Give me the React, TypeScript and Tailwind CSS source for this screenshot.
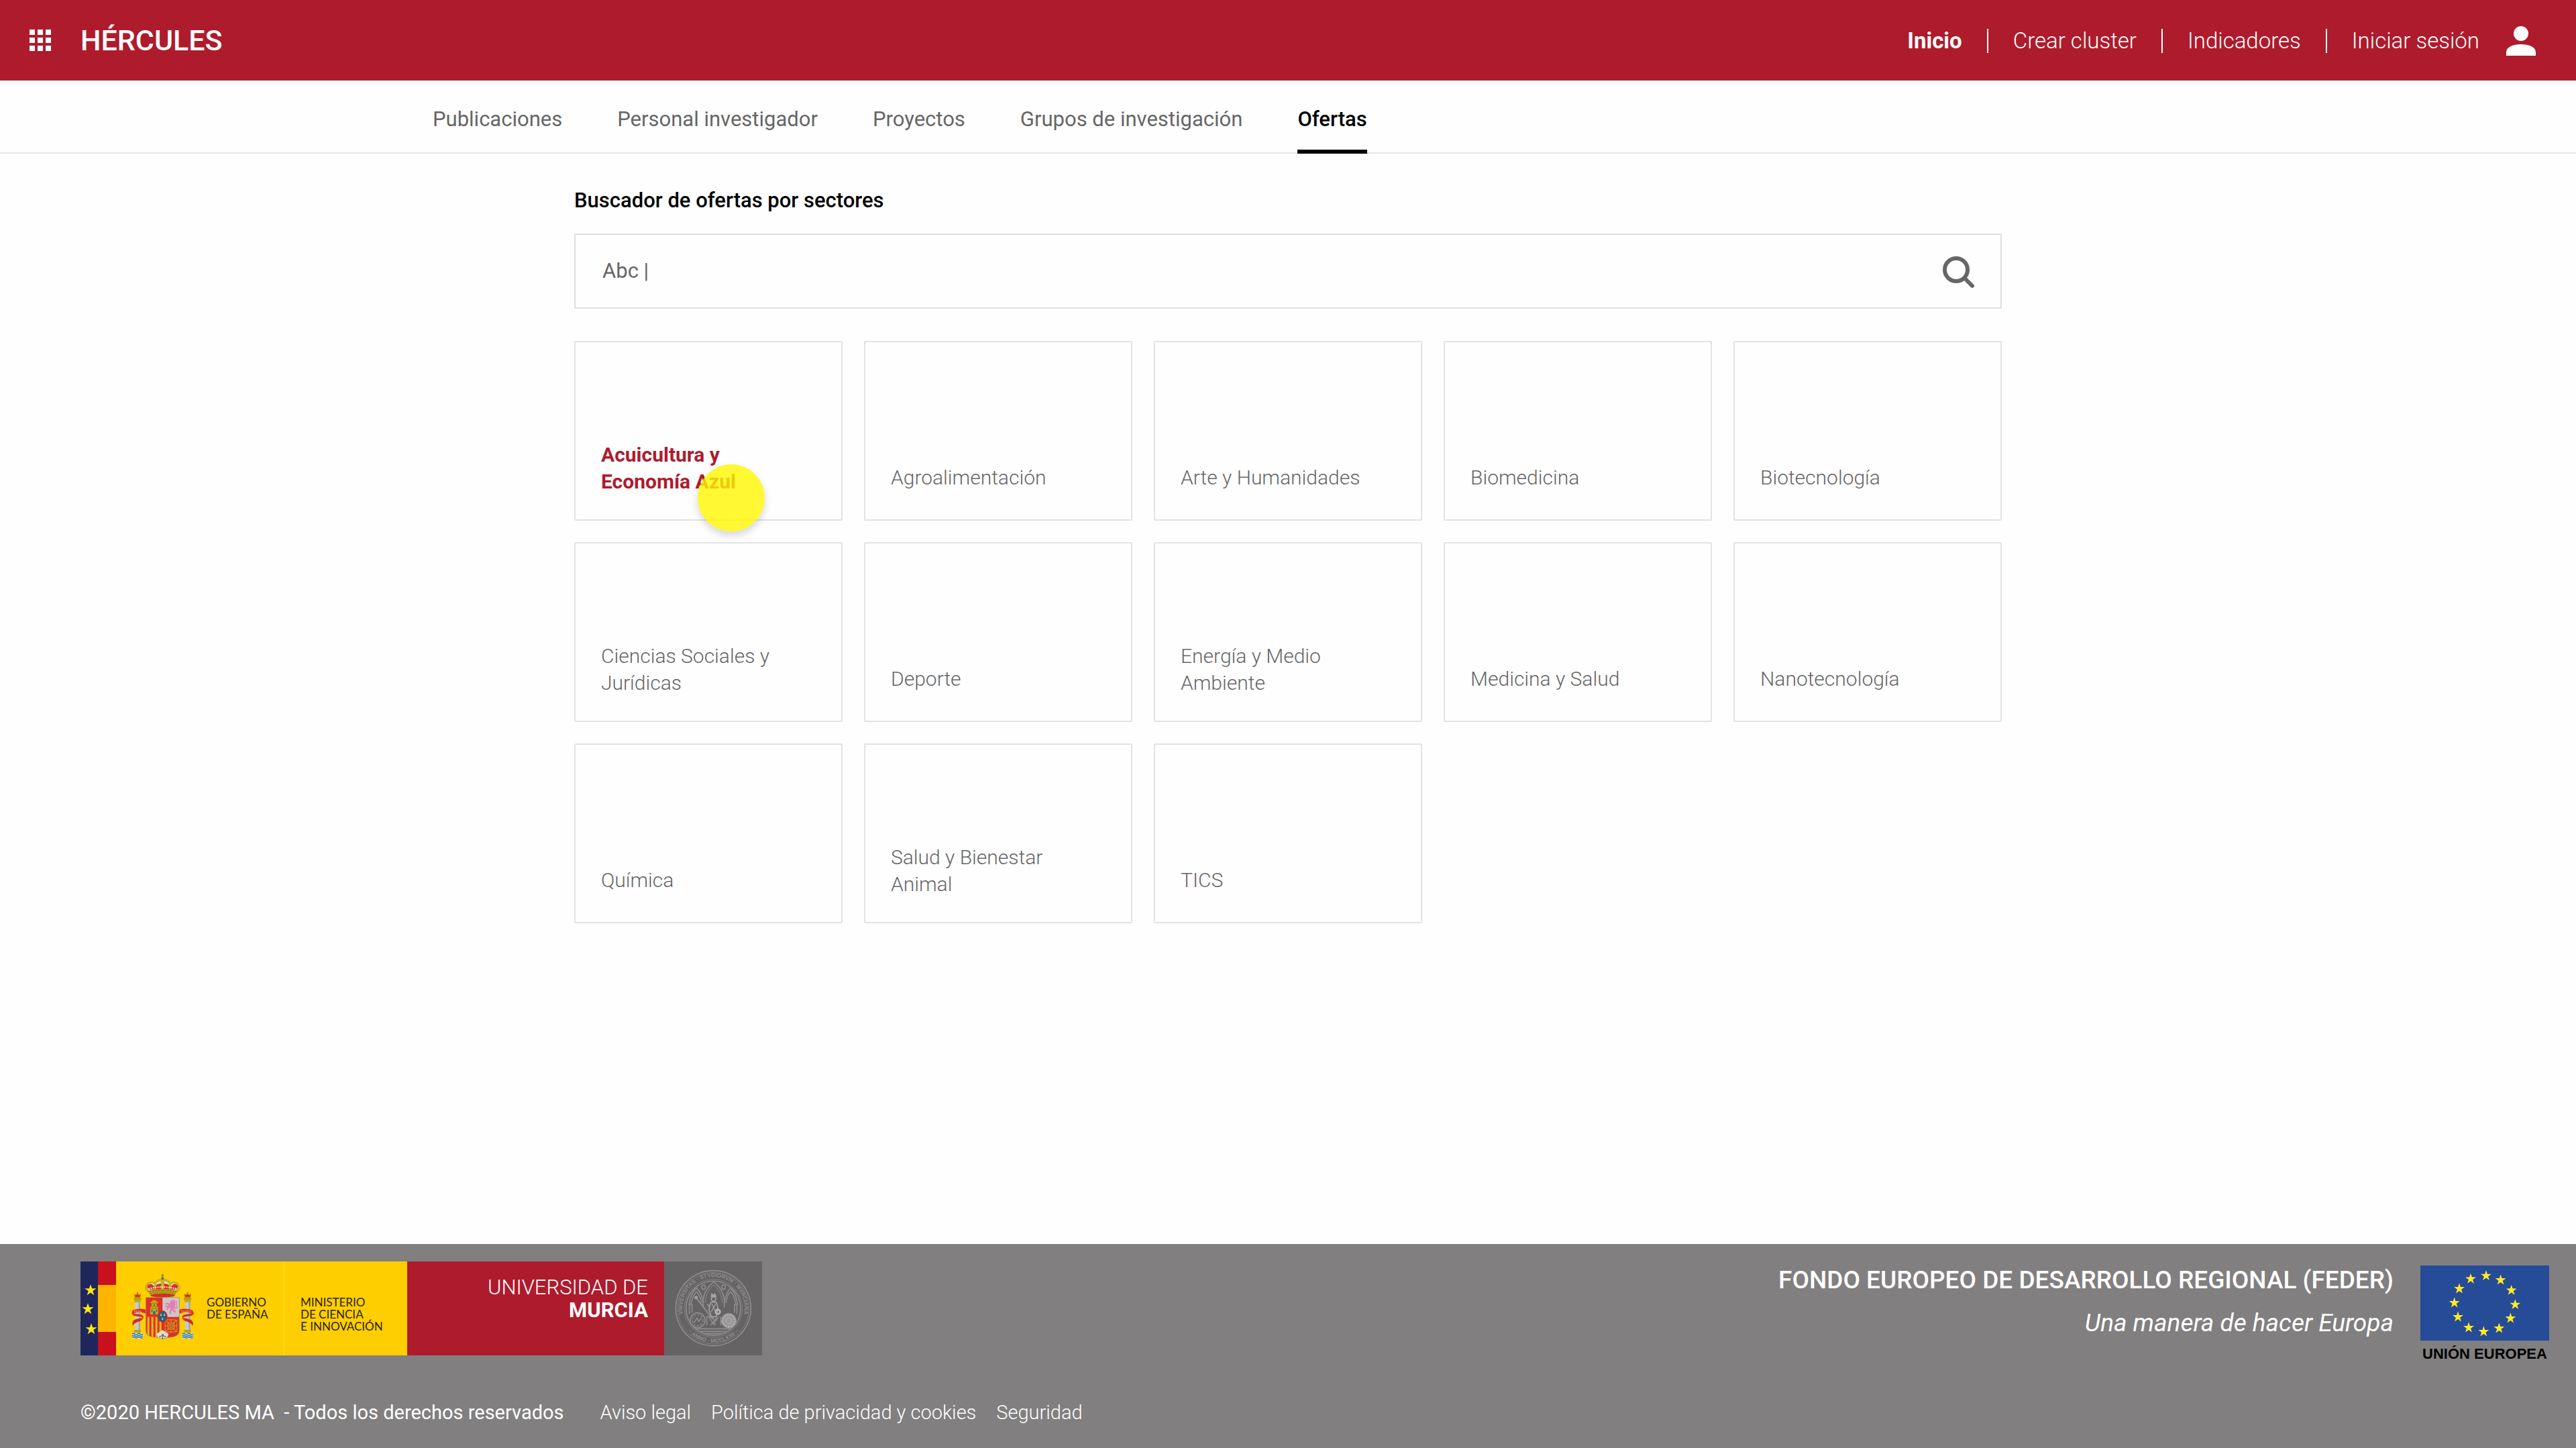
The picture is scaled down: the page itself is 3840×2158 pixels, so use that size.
import { MdApps } from "react-icons/md";

const topLinks = ["Inicio", "Crear cluster", "Indicadores", "Iniciar sesión"];
const sections = ["Publicaciones", "Personal investigador", "Proyectos", "Grupos de investigación", "Ofertas"];
const sectors = [
  "Acuicultura y Economía Azul",
  "Agroalimentación",
  "Arte y Humanidades",
  "Biomedicina",
  "Biotecnología",
  "Ciencias Sociales y Jurídicas",
  "Deporte",
  "Energía y Medio Ambiente",
  "Medicina y Salud",
  "Nanotecnología",
  "Química",
  "Salud y Bienestar Animal",
  "TICS",
];

function starPoints(cx: number, cy: number, r: number) {
  return Array.from({ length: 10 }, (_, i) => {
    const a = (Math.PI / 5) * i - Math.PI / 2;
    const d = i % 2 ? r * 0.39 : r;
    return `${(cx + d * Math.cos(a)).toFixed(1)},${(cy + d * Math.sin(a)).toFixed(1)}`;
  }).join(" ");
}

function UserIcon() {
  return (
    <svg viewBox="0 0 44 44" className="size-11" fill="currentColor" aria-hidden="true">
      <circle cx="22" cy="11" r="11" />
      <path d="M0 44V39C0 31 10 27 22 27S44 31 44 39V44z" />
    </svg>
  );
}

function SearchIcon() {
  return (
    <svg viewBox="0 -4 48 52" className="h-[52px] w-12 text-[#666]" fill="none" stroke="currentColor" strokeWidth="6" strokeLinecap="round" aria-hidden="true">
      <circle cx="20" cy="20" r="17" />
      <path d="M33 33L44 44" />
    </svg>
  );
}

function FlagStrip() {
  return (
    <svg viewBox="0 0 53 140" className="h-[140px] w-[53px] shrink-0" aria-hidden="true">
      <rect width="27" height="140" fill="#1f265c" />
      <rect x="26" width="27" height="140" fill="#c9101c" />
      <rect x="26" y="35" width="27" height="70" fill="#ffb400" />
      {[[15, 43], [11, 71], [16, 101]].map(([x, y]) => (
        <polygon key={y} points={starPoints(x, y, 9)} fill="#ffe813" />
      ))}
    </svg>
  );
}

function Pillar({ x }: { x: number }) {
  return (
    <g>
      <path d={`M${x - 13} 113q-5 12 3 18h20q8-6 3-18l-6 5-7-9-7 9z`} fill="#c96a14" />
      <path d={`M${x - 9} 119h18v7h-18z`} fill="#d3241f" />
      <circle cx={x} cy="109" r="3" fill="#a8780c" />
      <rect x={x - 17} y="132" width="34" height="9" rx="2" fill="#a9a013" />
      <rect x={x - 14} y="141" width="28" height="11" fill="#c0a90d" />
      <rect x={x - 12} y="151" width="24" height="126" fill="#c9c9c7" />
      <rect x={x + 5} y="151" width="7" height="126" fill="#a5a5a3" />
      <rect x={x - 15} y="275" width="30" height="12" fill="#b9a512" />
      <rect x={x - 25} y="289" width="50" height="25" fill="#dfe7e6" />
      {[293, 301, 309].map((y) => (
        <path key={y} d={`M${x - 24} ${y}q6-5 12 0t12 0t12 0t12 0`} fill="none" stroke="#15689b" strokeWidth="4" />
      ))}
    </g>
  );
}

function SpainArms() {
  return (
    <svg viewBox="48 20 282 300" className="h-[100px] w-[94px] shrink-0" role="img" aria-label="Escudo de España">
      {/* crown */}
      <path d="M126 110Q100 96 112 72Q126 52 152 62Q166 44 187 46Q208 44 222 62Q248 52 262 72Q274 96 248 110z" fill="#c9b21c" />
      <path d="M130 98Q110 86 122 74Q136 60 150 72Q146 84 154 94z" fill="#f0e9d8" />
      <path d="M244 98Q264 86 252 74Q238 60 224 72Q228 84 220 94z" fill="#f0e9d8" />
      <path d="M128 95Q112 84 122 74Q138 62 148 80L154 94z" fill="#dc2f26" />
      <path d="M246 95Q262 84 252 74Q236 62 226 80L220 94z" fill="#dc2f26" />
      <path d="M158 94Q150 70 180 67V94z" fill="#dc2f26" />
      <path d="M216 94Q224 70 194 67V94z" fill="#dc2f26" />
      <path d="M156 74Q160 60 179 57V68Q162 68 156 74zM218 74Q214 60 195 57V68Q212 68 218 74z" fill="#e6dfc8" />
      <path d="M124 92Q187 74 250 92" fill="none" stroke="#f4ecd2" strokeWidth="6" strokeDasharray="6 4" />
      <path d="M122 100Q187 86 252 100L242 123Q187 134 132 123z" fill="#bd9a16" />
      <path d="M128 104Q187 92 246 104" fill="none" stroke="#7b6a14" strokeWidth="3" strokeDasharray="8 5" />
      <path d="M134 118Q187 106 240 118L238 125Q187 134 136 125z" fill="#cf3122" />
      <path d="M132 113Q187 101 242 113" fill="none" stroke="#3f7a3a" strokeWidth="3" strokeDasharray="5 9" />
      <path d="M187 24v22M181 32h12" stroke="#8a7d1c" strokeWidth="4" />
      <circle cx="187" cy="45" r="6" fill="#3d7d6d" />
      {/* pillars */}
      <Pillar x={75} />
      <Pillar x={299} />
      {/* ribbons */}
      <path d="M112 184Q80 176 52 188L50 204Q58 200 62 200Q82 192 98 198L112 202z" fill="#dc2f26" />
      <path d="M50 200Q52 214 74 214Q96 214 98 222Q84 222 60 230Q48 240 54 256Q60 246 74 240Q102 234 102 216Q98 206 74 204Q60 204 50 196z" fill="#cf3122" />
      <path d="M262 184Q294 176 322 188L326 204Q318 200 312 200Q292 192 276 198L262 202z" fill="#dc2f26" />
      <path d="M326 200Q324 214 302 214Q280 214 278 222Q292 222 314 230Q328 240 322 256Q314 246 302 240Q274 234 274 216Q278 206 302 204Q316 204 326 196z" fill="#cf3122" />
      <text x="60" y="196" fontSize="13" fontWeight="700" fill="#f0b53c" className="font-['Liberation_Serif',serif]">PLVS</text>
      <text x="270" y="196" fontSize="13" fontWeight="700" fill="#f0b53c" className="font-['Liberation_Serif',serif]">VLTRA</text>
      {/* shield */}
      <clipPath id="shield"><path d="M112 130H262V276Q262 306 220 308Q198 310 187 316Q176 310 154 308Q112 306 112 276z" /></clipPath>
      <g clipPath="url(#shield)">
        <rect x="110" y="128" width="78" height="90" fill="#dd3127" />
        <rect x="187" y="128" width="78" height="90" fill="#cbc8cb" />
        <rect x="110" y="217" width="78" height="102" fill="#e8b817" />
        {[110, 128, 146, 164, 182].map((x) => <rect key={x} x={x} y="217" width="9" height="102" fill="#dd3127" />)}
        <rect x="187" y="217" width="78" height="102" fill="#dd3127" />
        <path d="M160 292L187 276L214 292L204 320H170z" fill="#dcdcd4" />
      </g>
      <path d="M112 130H262V276Q262 306 220 308Q198 310 187 316Q176 310 154 308Q112 306 112 276z" fill="none" stroke="#8d8a7a" strokeWidth="2" />
      {/* castle */}
      <path d="M132 206V170H138V156H134V148H141V142H158V148H166V156H161V170H167V206z" fill="#c9a814" />
      <path d="M133 170h34M133 178h34M138 156h23M149 134v9" stroke="#7a6d14" strokeWidth="2" />
      <path d="M145 206V194Q150 186 155 194V206z" fill="#1a6f9e" />
      <path d="M137 184h5v10h-5zM158 184h5v10h-5zM147 160h5v8h-5z" fill="#1a6f9e" />
      {/* lion */}
      <path d="M222 150l4-10 6 4 6-6 4 7 6 4-6 6 4 8-6 8 8 2-2 5-9-1 2 8 8 6-3 8-8-6-8-6-5 8 4 8-8 2-3-8 4-9 2-12-10 4-3 7-6-4 5-9-8-1-1-7 9 2 8-5-9-3-5 3-3-6 9-4 9 4z" fill="#e77fae" />
      <path d="M242 178q12 4 8-12q-4-12 2-20" fill="none" stroke="#e77fae" strokeWidth="4" />
      {/* chains */}
      <g fill="none" stroke="#d5a216" strokeWidth="4" strokeDasharray="5 2">
        <rect x="199" y="230" width="52" height="54" rx="10" />
        <rect x="211" y="243" width="28" height="29" />
        <path d="M199 230L251 284M251 230L199 284M225 228V288M197 257H253" />
      </g>
      <circle cx="225" cy="257" r="4" fill="#3a8a3a" />
      {/* pomegranate */}
      <path d="M172 306q15-9 30 0M187 306v10" fill="none" stroke="#2f7d3b" strokeWidth="4" />
      <circle cx="188" cy="298" r="5" fill="#d9442c" />
      {/* escutcheon */}
      <ellipse cx="187" cy="215" rx="22" ry="27" fill="#b8312c" />
      <ellipse cx="187" cy="215" rx="17" ry="22" fill="#16639c" />
      {[[180, 207], [195, 207], [187, 225]].map(([x, y]) => (
        <path key={`${x}-${y}`} d={`M${x} ${y - 7}l3 5-1 4h3l-3 4h-4l-3-4h3l-1-4z`} fill="#e2c018" />
      ))}
    </svg>
  );
}

function MurciaSeal() {
  const line = "#8f8d8e";
  return (
    <svg viewBox="15 15 438 420" className="h-[140px] w-[146px] shrink-0 bg-[#656364]" role="img" aria-label="Sello de la Universidad de Murcia">
      <defs>
        <path id="ring-top" d="M99 252A139 139 0 1 1 371 252" />
        <path id="ring-bottom" d="M88 270A154 154 0 0 0 382 270" />
        <clipPath id="seal-inner"><circle cx="235" cy="224" r="120" /></clipPath>
      </defs>
      <g fill="none" stroke={line} strokeWidth="5">
        <circle cx="235" cy="224" r="168" />
        <circle cx="235" cy="224" r="160" strokeWidth="2" />
        <circle cx="235" cy="224" r="122" />
        <circle cx="235" cy="224" r="130" strokeWidth="2" />
      </g>
      <text fontSize="25" fontWeight="700" fill={line} className="font-['Liberation_Sans',sans-serif]">
        <textPath href="#ring-top" startOffset="50%" textAnchor="middle">VNIVERSITAS · STVDIORVM · MVRCIANA</textPath>
      </text>
      <text fontSize="25" fontWeight="700" fill={line} className="font-['Liberation_Sans',sans-serif]">
        <textPath href="#ring-bottom" startOffset="50%" textAnchor="middle">~ ANNO · MCCLXXII ~</textPath>
      </text>
      <g clipPath="url(#seal-inner)" fill="none" stroke={line} strokeWidth="5">
        <path d="M188 200Q192 140 237 106Q282 140 286 200" />
        <path d="M198 200Q202 148 237 120Q272 148 276 200" strokeWidth="3" />
        <path d="M126 210Q132 160 160 134Q184 156 190 200M134 210Q142 168 160 150Q176 166 182 200" />
        <path d="M344 210Q338 160 312 134Q290 156 284 200M336 210Q330 168 312 150Q296 166 292 200" />
        <ellipse cx="191" cy="130" rx="8" ry="10" />
        <ellipse cx="281" cy="130" rx="8" ry="10" />
        <path d="M128 205V250M140 205V244M340 205V250M330 205V244M190 196V222M284 196V222" />
        <path d="M154 172L232 272" strokeWidth="6" />
        <path d="M206 262V300M268 262V300M140 316H330M150 328H320M162 338H308" />
        <path d="M215 262L236 296L258 262M222 300L250 268M206 262H232L244 300" />
      </g>
      <g fill="none" stroke="#a3a1a2" strokeWidth="5">
        <path d="M226 172L228 160L235 166L242 160L246 172z" fill="#a3a1a2" />
        <circle cx="236" cy="183" r="10" />
        <path d="M222 200Q236 192 250 200L256 228L248 262H226L216 230z" />
        <path d="M228 204L246 240M246 204L226 240M220 220L208 206" strokeWidth="4" />
        <circle cx="158" cy="176" r="5" fill="#a3a1a2" />
      </g>
      <g fill="none" stroke={line} strokeWidth="5">
        <circle cx="165" cy="278" r="33" />
        <circle cx="165" cy="278" r="24" strokeWidth="4" strokeDasharray="9 7" />
        <path d="M148 290l14-22 8 14 12-14" />
      </g>
      <circle cx="304" cy="280" r="34" fill="#979596" />
      <circle cx="304" cy="280" r="27" fill="none" stroke="#b4b2b3" strokeWidth="7" strokeDasharray="8 5" />
      <circle cx="304" cy="280" r="13" fill="none" stroke="#b4b2b3" strokeWidth="6" strokeDasharray="6 4" />
      <circle cx="255" cy="240" r="10" fill="none" stroke="#b4b2b3" strokeWidth="8" />
    </svg>
  );
}

const euStars = [
  [348, 93], [413, 112], [461, 158], [478, 222], [457, 283], [406, 328],
  [337, 343], [270, 325], [222, 277], [206, 214], [228, 151], [279, 107],
];

function EuFlag() {
  return (
    <svg viewBox="54 48 576 336" className="h-[112px] w-[192px]" aria-hidden="true">
      <rect x="54" y="48" width="576" height="336" fill="#264b97" />
      {euStars.map(([x, y]) => (
        <polygon key={x} points={starPoints(x, y + 1, 25)} fill="#ffea28" />
      ))}
    </svg>
  );
}

export default function App() {
  return (
    <div className="flex min-h-screen flex-col bg-[#fefefe] font-[Roboto,sans-serif]">
      <header className="flex h-[120px] items-center bg-[#ae1b2c] pr-[60px] pl-9 text-white">
        <button type="button" aria-label="Aplicaciones" className="mr-9">
          <MdApps className="size-12" />
        </button>
        <a href="#" className="text-[43px] font-medium">HÉRCULES</a>
        <div className="ml-auto flex items-center pt-0.5">
          <nav aria-label="Cuenta" className="flex items-center">
            {topLinks.map((label, i) => (
              <div key={label} className="flex items-center">
                {i > 0 && <span className="mx-[37px] h-9 w-0.5 bg-white" />}
                <a href="#" className={i === 0 ? "text-[33px] font-bold" : "text-[33px] font-light"}>{label}</a>
              </div>
            ))}
          </nav>
          <button type="button" aria-label="Perfil" className="ml-10">
            <UserIcon />
          </button>
        </div>
      </header>

      <nav aria-label="Secciones" className="flex h-[109px] gap-[82px] border-b-2 border-[#e5e5e5] pl-[645px]">
        {sections.map((label) => (
          <a
            key={label}
            href="#"
            aria-current={label === "Ofertas" ? "page" : undefined}
            className={
              label === "Ofertas"
                ? "-mb-0.5 border-b-6 border-black pt-[37px] text-[31px] leading-[42px] font-medium text-black"
                : "pt-[37px] text-[31px] leading-[42px] text-[#666]"
            }
          >
            {label}
          </a>
        ))}
      </nav>

      <main className="mx-auto w-full max-w-[2128px] flex-1 pt-[49px]">
        <label htmlFor="sector-search" className="block text-[31px] leading-[42px] font-medium text-black">
          Buscador de ofertas por sectores
        </label>
        <div className="mt-7 flex h-28 items-center rounded-xs border-2 border-[#ddd] pr-[38px] pl-10">
          <input
            id="sector-search"
            type="text"
            defaultValue="Abc |"
            className="min-w-0 flex-1 bg-transparent text-[31px] leading-[42px] text-[#666] outline-none"
          />
          <button type="button" aria-label="Buscar">
            <SearchIcon />
          </button>
        </div>

        <ul className="mt-12 grid grid-cols-5 gap-8">
          {sectors.map((label, i) => (
            <li key={label} className="relative">
              <a
                href="#"
                className="flex h-[268px] flex-col justify-end rounded-xs border-2 border-[#e3e3e3] pr-[88px] pb-9 pl-[38px]"
              >
                <span
                  className={
                    i === 0
                      ? "flex min-h-[52px] items-center text-[30px] leading-10 font-bold text-[#ae1b2c]"
                      : "flex min-h-[52px] items-center text-[30px] leading-10 font-light text-[#666]"
                  }
                >
                  {label}
                </span>
              </a>
              {i === 0 && (
                <span className="pointer-events-none absolute top-[184px] left-[184px] z-10 size-[100px] rounded-full bg-[rgba(255,246,0,0.8)] shadow-[0_6px_12px_rgba(0,0,0,0.16)]" />
              )}
            </li>
          ))}
        </ul>
      </main>

      <footer className="h-[304px] bg-[#817f80] pt-[26px] pr-10 pl-[120px] text-white">
        <div className="flex items-start justify-between">
          <div className="flex h-[140px]">
            <FlagStrip />
            <div className="flex bg-[#ffce00] font-[Lato,sans-serif] text-[17px] leading-[18px] text-[#2b2308]">
              <div className="flex w-[251px] gap-[18px] border-r-2 border-[#ffd91f] pt-[17px] pl-[23px]">
                <SpainArms />
                <p className="pt-[35px] whitespace-nowrap">GOBIERNO<br />DE ESPAÑA</p>
              </div>
              <p className="w-[183px] pt-[52px] pl-6 whitespace-nowrap">MINISTERIO<br />DE CIENCIA<br />E INNOVACIÓN</p>
            </div>
            <div className="w-[383px] bg-[#ae1b2c] pt-[22px] pr-6 text-right text-[31px] leading-[34px] text-white">
              <p className="font-light">UNIVERSIDAD DE</p>
              <p className="font-bold">MURCIA</p>
            </div>
            <MurciaSeal />
          </div>
          <div className="flex gap-10">
            <div className="text-right text-[37px] leading-[64px]">
              <p className="-mt-1 font-medium">FONDO EUROPEO DE DESARROLLO REGIONAL (FEDER)</p>
              <p className="italic">Una manera de hacer Europa</p>
            </div>
            <div className="flex flex-col items-center pt-1.5">
              <EuFlag />
              <p className="mt-2 w-[192px] text-center font-['Liberation_Sans',sans-serif] text-[22px] leading-6 font-bold whitespace-nowrap text-black">
                UNIÓN EUROPEA
              </p>
            </div>
          </div>
        </div>
        <div className="mt-[55px] flex text-[29px] leading-10">
          <p className="mr-[54px] whitespace-pre">©2020 HERCULES MA  - Todos los derechos reservados</p>
          <div className="flex gap-[30px] font-light">
            <a href="#">Aviso legal</a>
            <a href="#">Política de privacidad y cookies</a>
            <a href="#">Seguridad</a>
          </div>
        </div>
      </footer>
    </div>
  );
}
